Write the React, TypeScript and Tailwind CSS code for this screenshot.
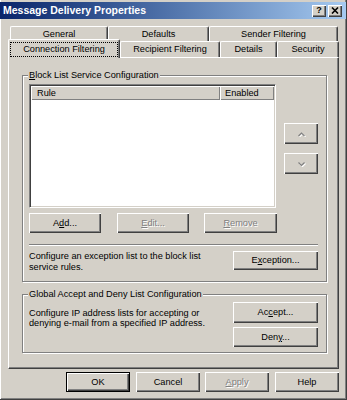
const raisedBtn =
  "shadow-[inset_1px_1px_0_#fff,inset_-1px_-1px_0_#404040,inset_-2px_-2px_0_#808080]";

function Btn({
  children,
  className = "",
  disabled = false,
  isDefault = false,
}: {
  children: React.ReactNode;
  className?: string;
  disabled?: boolean;
  isDefault?: boolean;
}) {
  return (
    <div
      className={`flex shrink-0 items-center justify-center bg-[#d4d0c8] ${
        isDefault ? "border border-black" : ""
      } ${raisedBtn} ${
        disabled ? "text-[#808080] [text-shadow:1px_1px_0_#fff]" : "text-black"
      } ${className}`}
    >
      {children}
    </div>
  );
}

function Tab({ label, className = "" }: { label: string; className?: string }) {
  return (
    <div
      className={`flex shrink-0 items-center justify-center rounded-t-[2px] border-t border-l border-r border-t-white border-l-white border-r-[#404040] bg-[#d4d0c8] shadow-[inset_-1px_0_0_#808080] ${className}`}
    >
      {label}
    </div>
  );
}

function Group({
  label,
  className = "",
  children,
}: {
  label: React.ReactNode;
  className?: string;
  children: React.ReactNode;
}) {
  return (
    <div
      className={`relative border border-[#808080] shadow-[1px_1px_0_#fff,inset_1px_1px_0_#fff] ${className}`}
    >
      <span className="absolute -top-[6px] left-[5px] bg-[#d4d0c8] px-[1px] leading-[11px]">
        {label}
      </span>
      {children}
    </div>
  );
}

function Chevron({ up }: { up?: boolean }) {
  return (
    <svg width="9" height="6" viewBox="0 0 9 6">
      <path
        d={up ? "M1.5 5 L4.5 2 L7.5 5" : "M1.5 1.5 L4.5 4.5 L7.5 1.5"}
        fill="none"
        stroke="#fff"
        strokeWidth="1.2"
        transform="translate(1 1)"
      />
      <path
        d={up ? "M1.5 5 L4.5 2 L7.5 5" : "M1.5 1.5 L4.5 4.5 L7.5 1.5"}
        fill="none"
        stroke="#808080"
        strokeWidth="1.2"
      />
    </svg>
  );
}

export default function App() {
  return (
    <div className="h-[400px] w-[347px] overflow-hidden border-r border-b border-r-[#404040] border-b-[#404040] bg-[#d4d0c8] font-['Liberation_Sans',Arial,sans-serif] text-[9.2px] leading-[11px] text-black shadow-[inset_1px_0_0_#fff,inset_-1px_-1px_0_#808080]">
      {/* title bar */}
      <div className="mt-[2px] flex h-[17px] items-center justify-between bg-linear-to-r from-[#0a246a] to-[#a6caf0] pr-[4px] pl-[3px]">
        <span className="text-[10.5px] font-bold text-white">Message Delivery Properties</span>
        <div className="flex gap-[2px]">
          <div className={`flex h-[12px] w-[14px] items-center justify-center bg-[#d4d0c8] text-[9px] font-bold ${raisedBtn}`}>
            ?
          </div>
          <div className={`flex h-[12px] w-[14px] items-center justify-center bg-[#d4d0c8] ${raisedBtn}`}>
            <svg width="8" height="7" viewBox="0 0 8 7">
              <path d="M1 0.5 L7 6.5 M7 0.5 L1 6.5" stroke="#000" strokeWidth="1.6" />
            </svg>
          </div>
        </div>
      </div>

      {/* tabs */}
      <div className="mt-[7px] ml-[8px] w-[331px]">
        <div className="flex h-[15px] pl-[2px]">
          <Tab label="General" className="h-[15px] w-[98px]" />
          <Tab label="Defaults" className="h-[15px] w-[101px]" />
          <Tab label="Sender Filtering" className="h-[15px] w-[129px]" />
        </div>
        <div className="flex h-[16px] items-end">
          <div className="relative z-10 -mb-[1px] flex h-[19px] w-[112px] shrink-0 rounded-t-[2px] border-t border-l border-r border-t-white border-l-white border-r-[#404040] bg-[#d4d0c8] px-[1px] pt-[2px] pb-[1px] shadow-[inset_-1px_0_0_#808080]">
            <div className="flex flex-1 items-center justify-center border border-dotted border-black">
              Connection Filtering
            </div>
          </div>
          <Tab label="Recipient Filtering" className="h-[16px] w-[100px]" />
          <Tab label="Details" className="h-[16px] w-[57px]" />
          <Tab label="Security" className="h-[16px] w-[62px]" />
        </div>

        {/* panel */}
        <div className="h-[312px] w-[331px] border border-t-white border-l-white border-r-[#404040] border-b-[#404040] pt-[17px] pl-[13px] shadow-[inset_-1px_-1px_0_#808080]">
          <Group
            className="h-[207px] w-[305px] pt-[8px] pl-[6px]"
            label={
              <>
                <span className="underline">B</span>lock List Service Configuration
              </>
            }
          >
            <div className="flex">
              <div className="h-[124px] w-[247px] border border-t-[#808080] border-l-[#808080] border-r-white border-b-white bg-white p-[1px] shadow-[inset_1px_1px_0_#404040,inset_-1px_-1px_0_#d4d0c8]">
                <div className="flex h-[14px]">
                  <div className="flex w-[189px] items-center bg-[#d4d0c8] pl-[6px] shadow-[inset_1px_1px_0_#fff,inset_-1px_-1px_0_#808080]">
                    Rule
                  </div>
                  <div className="flex w-[54px] items-center bg-[#d4d0c8] pl-[5px] shadow-[inset_1px_1px_0_#fff,inset_-1px_-1px_0_#808080]">
                    Enabled
                  </div>
                </div>
              </div>
              <div className="ml-[8px] flex flex-col pt-[39px]">
                <Btn disabled className="h-[21px] w-[34px]">
                  <Chevron up />
                </Btn>
                <Btn disabled className="mt-[9px] h-[21px] w-[34px]">
                  <Chevron />
                </Btn>
              </div>
            </div>

            <div className="mt-[5px] flex">
              <Btn className="h-[20px] w-[72px]">
                <span>
                  A<span className="underline">d</span>d...
                </span>
              </Btn>
              <Btn disabled className="ml-[16px] h-[20px] w-[72px]">
                <span>
                  <span className="underline">E</span>dit...
                </span>
              </Btn>
              <Btn disabled className="ml-[15px] h-[20px] w-[73px]">
                <span>
                  <span className="underline">R</span>emove
                </span>
              </Btn>
            </div>

            <div className="mt-[11px] h-[2px] w-[289px] border-t border-b border-t-[#808080] border-b-white" />

            <div className="mt-[5px] flex w-[289px] justify-between">
              <p className="w-[190px] leading-[11px]">
                Configure an exception list to the block list service rules.
              </p>
              <Btn className="h-[19px] w-[85px]">
                <span>
                  E<span className="underline">x</span>ception...
                </span>
              </Btn>
            </div>
          </Group>

          <Group
            className="mt-[12px] h-[59px] w-[305px] pt-[7px] pl-[6px]"
            label="Global Accept and Deny List Configuration"
          >
            <div className="flex w-[289px] justify-between">
              <p className="w-[200px] pt-[6px] leading-[10px]">
                Configure IP address lists for accepting or denying e-mail from a specified IP
                address.
              </p>
              <div className="flex flex-col">
                <Btn className="h-[21px] w-[85px]">
                  <span>
                    Ac<span className="underline">c</span>ept...
                  </span>
                </Btn>
                <Btn className="mt-[4px] h-[20px] w-[85px]">
                  <span>
                    Den<span className="underline">y</span>...
                  </span>
                </Btn>
              </div>
            </div>
          </Group>
        </div>

        {/* dialog buttons */}
        <div className="mt-[3px] ml-[58px] flex">
          <Btn isDefault className="h-[20px] w-[64px]">
            OK
          </Btn>
          <Btn className="ml-[6px] h-[20px] w-[64px]">Cancel</Btn>
          <Btn disabled className="ml-[5px] h-[20px] w-[64px]">
            <span>
              <span className="underline">A</span>pply
            </span>
          </Btn>
          <Btn className="ml-[6px] h-[20px] w-[64px]">Help</Btn>
        </div>
      </div>
    </div>
  );
}
